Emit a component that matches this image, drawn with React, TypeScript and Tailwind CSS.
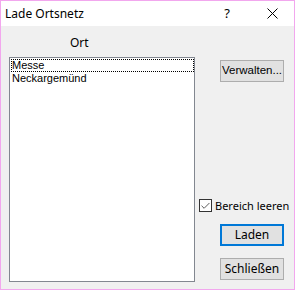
import { Check } from 'lucide-react'

const ui = { fontFamily: '"Noto Sans", "Open Sans", sans-serif' }
const classic = { fontFamily: '"Liberation Sans", Arial, sans-serif' }

const items = ['Messe', 'Neckargemünd']

function Button({ label, focused, style }: { label: string; focused?: boolean; style?: React.CSSProperties }) {
  return (
    <button
      type="button"
      style={style}
      className={
        focused
          ? 'w-[64px] h-[22px] bg-[#e1e1e1] border-2 border-[#0078d7] text-[12px] leading-none text-black flex items-center justify-center whitespace-nowrap'
          : 'w-[64px] h-[22px] bg-[#e1e1e1] border border-[#adadad] text-[12px] leading-none text-black flex items-center justify-center whitespace-nowrap'
      }
    >
      {label}
    </button>
  )
}

export default function App() {
  return (
    <div className="w-[295px] h-[290px] border border-[#f2a7ee] flex flex-col bg-[#f0f0f0]" style={ui}>
      {/* title bar */}
      <div className="h-[25px] bg-white flex items-center shrink-0">
        <span className="ml-[4px] text-[12px] text-black leading-none">Lade Ortsnetz</span>
        <span className="ml-auto text-[13px] text-black leading-none mr-[37px]">?</span>
        <svg width="11" height="11" viewBox="0 0 11 11" className="mr-[16px]">
          <path d="M0.5 0.5 L10.5 10.5 M10.5 0.5 L0.5 10.5" stroke="#000" strokeWidth="1" />
        </svg>
      </div>

      {/* body */}
      <div className="flex-1 flex">
        <div className="ml-[8px] flex flex-col">
          <div className="h-[31px] pl-[61px] pt-[9px] text-[12px] leading-[16px] text-black">Ort</div>
          <div className="w-[186px] h-[225px] border border-[#828790] bg-white pt-[1px] pl-[1px]" style={classic}>
            {items.map((it, i) => (
              <div
                key={it}
                className={
                  i === 0
                    ? 'h-[13px] border border-dotted border-black text-[11px] leading-[11px] text-black'
                    : 'h-[13px] border border-transparent text-[11px] leading-[11px] text-black'
                }
              >
                {it}
              </div>
            ))}
          </div>
        </div>

        <div className="ml-[4px] w-[85px] flex flex-col items-end pt-[34px] pb-[9px]">
          <Button label="Verwalten..." style={{ ...classic, fontSize: '11.5px' }} />
          <div className="flex-1" />
          <label className="flex items-center w-[85px] h-[13px]">
            <span className="w-[13px] h-[13px] shrink-0 border border-[#333] bg-white flex items-center justify-center">
              <Check size={12} strokeWidth={1.4} color="#000" />
            </span>
            <span className="ml-[3px] text-[11px] leading-none text-black whitespace-nowrap">Bereich leeren</span>
          </label>
          <div className="mt-[12px]">
            <Button label="Laden" focused />
          </div>
          <div className="mt-[12px]">
            <Button label="Schließen" />
          </div>
        </div>
      </div>
    </div>
  )
}
